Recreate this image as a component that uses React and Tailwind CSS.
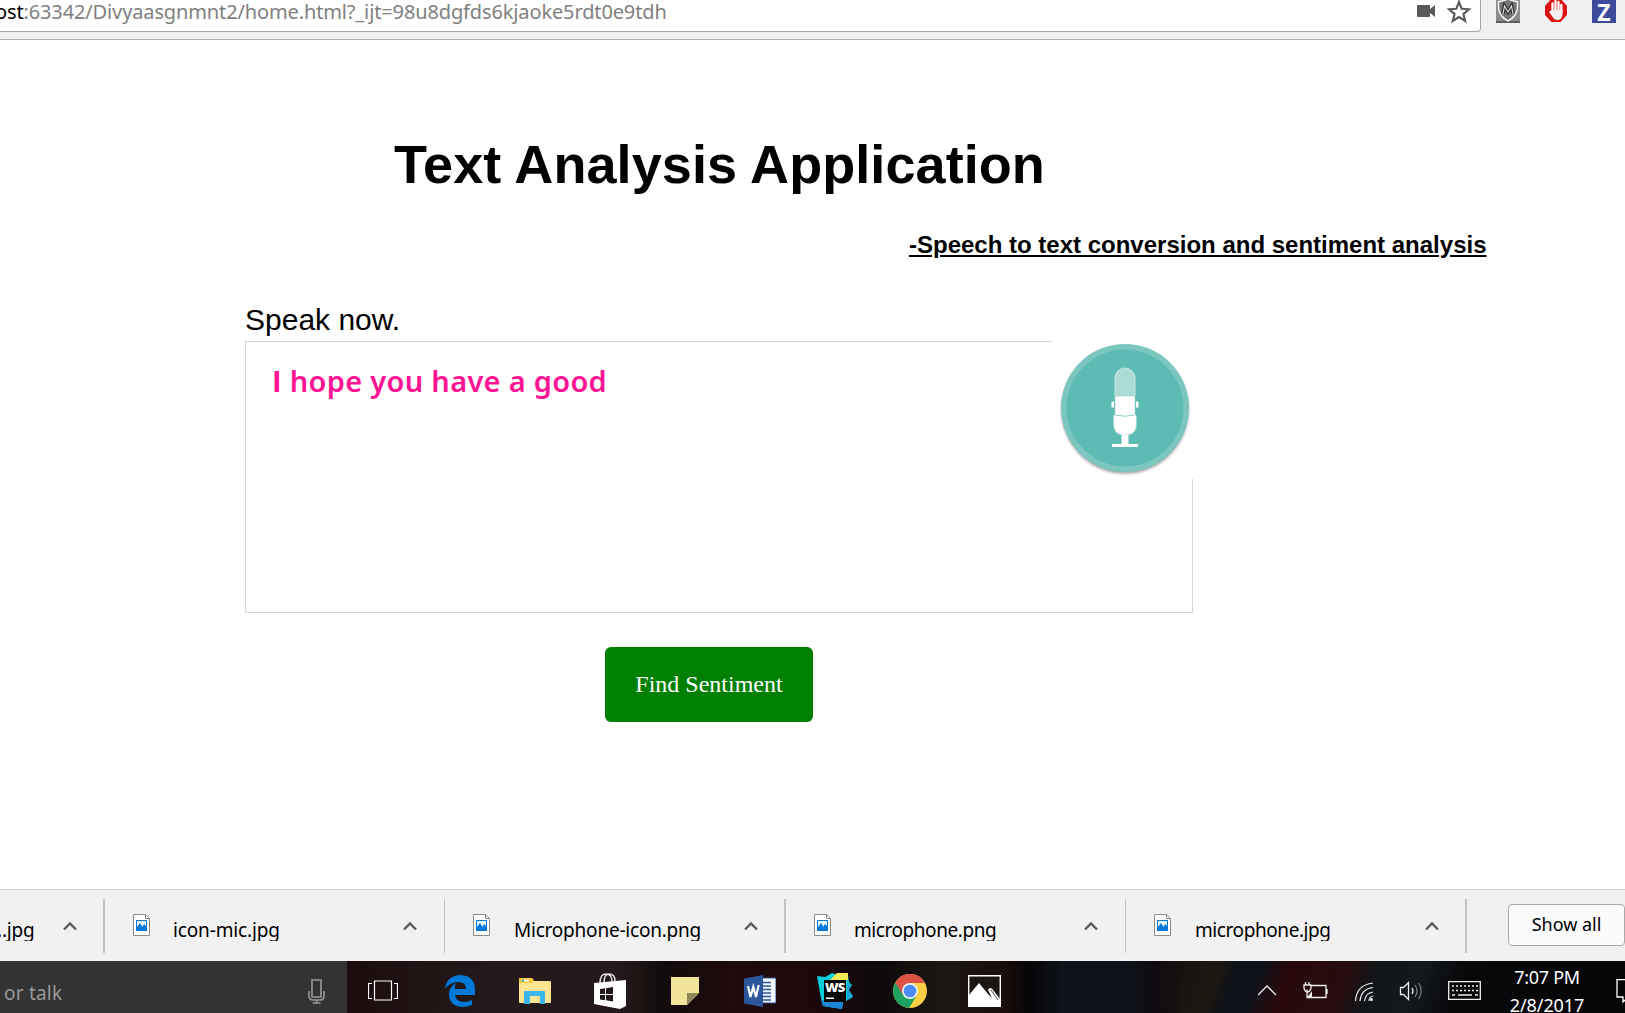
import React from "react";

function Url() {
  return (
    <header className="flex h-10 shrink-0 items-start border-b border-[#b1b1b1] bg-[#f1f1f1]">
      <div className="flex h-8 w-[1481px] items-start rounded-br-[4px] border-r border-b border-[#a6a6a6] bg-white">
        <div className="-ml-[5px] w-[1422px] shrink-0 font-['Noto_Sans',sans-serif] text-[20px] leading-[24px] tracking-[-0.13px] whitespace-nowrap text-[#808080]">
          <span className="text-black">ost</span>:63342/Divyaasgnmnt2/home.html?_ijt=98u8dgfds6kjaoke5rdt0e9tdh
        </div>
        <svg width="60" height="24" viewBox="0 0 60 24" fill="none">
          <path d="M1 5h11q1 0 1 1v3l5-4v12l-5-4v3q0 1-1 1H1q-1 0-1-1V6q0-1 1-1z" fill="#595959" />
          <path d="M42 2l2.700 6.800 7.300.5-5.600 4.700 1.800 7-6.200-3.900-6.200 3.900 1.800-7L32 9.300l7.300-.5z" stroke="#595959" strokeWidth="2.100" />
        </svg>
      </div>
      <div className="ml-[15px] flex items-start">
        <svg width="24" height="23" viewBox="0 0 24 23">
          <rect y="-3" width="24" height="26" rx="1.500" fill="#8b8b8b" />
          <path d="M0 21h24v2H0z" fill="#5c5c5c" />
          <path d="M2.500 1.500q5.500 0 9.500-3 4 3 9.500 3V9q-2 8-9.500 12Q4.500 17 2.500 9z" fill="#777" stroke="#f5f5f5" strokeWidth="1.500" />
          <path d="M7 14l1.500-8L12 12l3.500-6 1.500 8" fill="none" stroke="#333" strokeWidth="3.600" />
          <path d="M7 14l1.500-8L12 12l3.500-6 1.500 8" fill="none" stroke="#e4e4e4" strokeWidth="1.100" />
        </svg>
        <svg className="ml-[25px]" width="22" height="22" viewBox="0 0 22 22">
          <path d="M6-1h10l6 7v9l-6.500 7h-9L0 15V6z" fill="#dc1212" />
          <path d="M7.500 13V3.500M10.500 11V1M13.500 11V2M16.300 13V5M10 18l-4.500-6" stroke="#fff" strokeWidth="2.300" strokeLinecap="round" />
          <path d="M6.500 10h11v5q-1 5-5 5t-5-4z" fill="#f5eeee" />
        </svg>
        <div className="ml-[25px] flex h-[23px] w-6 items-end justify-center bg-[#3c4b9b] font-['Open_Sans',sans-serif] text-[23px] leading-[22px] font-bold text-white">Z</div>
      </div>
    </header>
  );
}

function MicImage() {
  return (
    <svg width="141" height="138" viewBox="1052 340 141 138" className="absolute -top-px -right-px bg-white">
      <defs>
        <filter id="shadow" x="-10%" y="-10%" width="120%" height="120%">
          <feGaussianBlur stdDeviation="1.500" />
        </filter>
      </defs>
      <circle cx="1125" cy="409" r="63.500" fill="#999" filter="url(#shadow)" />
      <circle cx="1125" cy="407" r="64" fill="#7bc7c0" />
      <circle cx="1125" cy="407" r="58.500" fill="#5cbbb2" />
      <path d="M1115 395v-18a10 10 0 0 1 20 0v18z" fill="#addcd7" />
      <path d="M1115 395v-18a10 10 0 0 1 20 0v18" fill="none" stroke="#c9e9e5" />
      <path d="M1115 395h20v18l1.500 2v8q0 10-9 11h-5q-9-1-9-11v-8l1.500-2z" fill="#fff" stroke="#9fd6d1" strokeWidth=".7" />
      <path d="M1115 414q10 2.500 20 0" fill="none" stroke="#8cceca" strokeWidth="1" />
      <path d="M1111.500 400.500h2.500v6h-2.500zM1136 400.500h2.500v6h-2.500z" fill="#fff" />
      <path d="M1121.500 434h7v9h9.500v3h-26v-3h9.500z" fill="#fff" />
    </svg>
  );
}

function Page() {
  return (
    <main className="flex h-[849px] shrink-0 flex-col bg-white font-['Liberation_Sans',sans-serif] text-black">
      <h1 className="mt-[93px] ml-[394px] h-[62px] text-[54px] leading-[62px] font-bold tracking-[0.07px] whitespace-nowrap">Text Analysis Application</h1>
      <h3 className="mt-[36px] ml-[909px] h-7 text-[24px] leading-7 font-bold whitespace-nowrap underline">-Speech to text conversion and sentiment analysis</h3>
      <div className="mt-[44px] ml-[245px] h-[38px] text-[30px] leading-[34px] whitespace-nowrap">Speak now.</div>
      <div className="relative ml-[245px] h-[272px] w-[948px] border border-[#d6d6d6] pt-[19px] pl-[26px]">
        <div className="h-10 font-['Noto_Sans',sans-serif] text-[29px] leading-[40px] font-semibold tracking-[0.3px] whitespace-nowrap text-[#ff1493]">
          <span className="font-['Open_Sans',sans-serif] font-bold">I</span> hope you have a good
        </div>
        <MicImage />
      </div>
      <button className="mt-[34px] ml-[605px] h-[75px] w-[208px] rounded-md bg-[#008000] pb-[2px] font-['Liberation_Serif',serif] text-[24px] whitespace-nowrap text-white">Find Sentiment</button>
    </main>
  );
}

function Caret() {
  return (
    <svg width="14" height="10" viewBox="0 0 14 10" className="mt-[31px] shrink-0">
      <path d="M1 8.500l6-6 6 6" fill="none" stroke="#5a5a5a" strokeWidth="2.400" />
    </svg>
  );
}

function FileIcon() {
  return (
    <svg width="17" height="22" viewBox="0 0 17 22" className="mt-6 shrink-0">
      <path d="M.5.5h12l4 4v17H.5z" fill="#fff" stroke="#8c8c8c" />
      <path d="M12.500.5v4h4" fill="none" stroke="#8c8c8c" />
      <path d="M3 6h11v11H3z" fill="#0078d7" />
      <path d="M4 7h9v5l-2-2-1.500 3L7 9l-3 4z" fill="#e8f5ff" />
    </svg>
  );
}

const files = [
  { name: "icon-mic.jpg", cell: "w-[341px]", rule: "w-[2px]", text: "ml-[23px] tracking-[-0.15px]" },
  { name: "Microphone-icon.png", cell: "w-[340px]", rule: "w-px", text: "ml-[24px] tracking-[-0.22px]" },
  { name: "microphone.png", cell: "w-[341px]", rule: "w-[2px]", text: "ml-[23px] tracking-[-0.44px]" },
  { name: "microphone.jpg", cell: "w-[340px]", rule: "w-px", text: "ml-[24px] tracking-[-0.42px]" },
];

function Downloads() {
  return (
    <section className="flex h-[72px] shrink-0 border-t border-[#d0d0d0] bg-[#f1f1f1] font-['Noto_Sans',sans-serif] text-black">
      <div className="flex w-[103px] shrink-0">
        <div className="mt-[24px] -ml-[3px] h-[27px] w-[66px] shrink-0 overflow-hidden text-[19px] leading-[32px] tracking-[-0.2px]">..jpg</div>
        <Caret />
      </div>
      {files.map((f) => (
        <div key={f.name} className={`flex shrink-0 ${f.cell}`}>
          <div className={`mt-[9px] h-[54px] shrink-0 bg-[#c3c3c3] ${f.rule}`} />
          <div className="w-[28px] shrink-0" />
          <FileIcon />
          <div className={`mt-[24px] h-[27px] w-[230px] shrink-0 overflow-hidden text-[19px] leading-[32px] whitespace-nowrap ${f.text}`}>{f.name}</div>
          <Caret />
        </div>
      ))}
      <div className="mt-[9px] h-[54px] w-[2px] shrink-0 bg-[#c3c3c3]" />
      <button className="mt-[14px] ml-[41px] h-[42px] w-[117px] shrink-0 rounded-[4px] border border-[#a9a9a9] bg-[#fbfbfb] pb-[2px] text-[18px] leading-[38px]">Show all</button>
    </section>
  );
}

function Taskbar() {
  return (
    <footer className="flex h-[52px] shrink-0 overflow-hidden bg-[#0d0b0d] font-['Noto_Sans',sans-serif] text-white">
      <div className="flex w-[347px] shrink-0 bg-[#333]">
        <span className="mt-[16px] ml-[4px] w-[304px] text-[19px] leading-[32px] tracking-[0.2px] text-[#9a9a9a]">or talk</span>
        <svg width="17" height="25" viewBox="0 0 17 25" className="mt-[18px]" fill="none" stroke="#999" strokeWidth="1.600">
          <path d="M4 1h9v17H4zM1 12v5q0 4 4 4h7q4 0 4-4v-5M8.500 21v3M4.500 24h8" />
        </svg>
      </div>
      <div className="flex w-[833px] shrink-0 items-center bg-[linear-gradient(90deg,#1c0c0e,#241a1b_18%,#24191a_33%,#120b0b_38%,#1f0a0d_46%,#1c080b_57%,#0d0a0a_64%,#1c1713_72%,#1a0c0c_79%,#060507_82%,#0e141b_86%,#0f141c_93%,#0e0a10_97%,#16120f)] pt-[8px]">
        <svg className="ml-[21px] shrink-0" width="30" height="22" viewBox="0 0 30 22" fill="none" stroke="#fff">
          <path d="M6.500 1h17v19h-17zM4 3.500H.5v15H4M26 3.500h3.500v15H26" strokeWidth="1.200" />
        </svg>
        <svg className="ml-[47px] shrink-0" width="30" height="32" viewBox="0 0 30 32">
          <path d="M0 14Q2 0 16 0q14 1 14 15v5H10q1 7 9 7 5 0 8-2v5q-5 2-10 2Q4 31 4 19q0-7 7-11-1 2-1 6h11q0-7-8-7Q5 7 0 14z" fill="#0078d7" />
        </svg>
        <svg className="ml-[44px] shrink-0" width="32" height="26" viewBox="0 0 32 26">
          <path d="M0 1q0-1 1-1h12l2 3h16q1 0 1 1v20q0 1-1 1H1q-1 0-1-1z" fill="#ffe593" />
          <path d="M0 1q0-1 1-1h12l2 3-2 2H0z" fill="#fbc933" />
          <path d="M3 1.500h7v2H3z" fill="#fff" />
          <path d="M3 1.500h2v2H3z" fill="#2aa" />
          <path d="M5 26V14q0-1 1-1h19q1 0 1 1v12h-5v-8H11v8z" fill="#3bb5ea" />
        </svg>
        <svg className="ml-[43px] shrink-0" width="32" height="36" viewBox="0 0 32 36">
          <path d="M6 10Q6 1 12 1q6 0 6 8M10 10Q10 1 15 1q6 0 6 7" fill="none" stroke="#ddd" strokeWidth="1.500" />
          <path d="M0 10l32-3v26l-6 3-26-5z" fill="#fff" />
          <path d="M6 16l5-.7V21H6zM12 15.200l7-1.200v7h-7zM6 22h5v5.200L6 26.500zM12 22h7v6.500l-7-1.200z" fill="#21181a" />
        </svg>
        <svg className="ml-[45px] shrink-0" width="28" height="28" viewBox="0 0 28 28">
          <path d="M0 0h28v16L16 28H0z" fill="#f1e59a" />
          <path d="M16 28V16h12z" fill="#8f8758" />
        </svg>
        <svg className="ml-[45px] shrink-0" width="32" height="32" viewBox="0 0 32 32">
          <path d="M17 3h14q1 0 1 1v23q0 1-1 1H17z" fill="#f3f6fb" stroke="#2b579a" />
          <path d="M19 7.500h8M19 11h8M19 14.500h8M19 18h8M19 21.500h8M19 25h8" stroke="#2b579a" strokeWidth="1.500" />
          <path d="M0 3.500L19 0v32L0 28.500z" fill="#2b579a" />
          <path d="M4 11l2.500 11L9.300 12 12 22l2.700-12" fill="none" stroke="#fff" strokeWidth="2.200" />
        </svg>
        <div className="relative ml-[41px] h-9 w-9 shrink-0">
          <svg width="36" height="36" viewBox="0 0 36 36">
            <path d="M0 3l8 1 7-4 6 2h10l1 7 3 3-4 5 5 7-7 4h-3l-1 8-19-3-2-8z" fill="#07d0da" />
            <path d="M4 27l22 2-1 7-19-3z" fill="#1a86d8" />
            <path d="M30 9l5 3-3 5 4 6-6 4z" fill="#1ca6da" />
            <path d="M13 7l7-7h11v7z" fill="#f5ec55" />
            <path d="M7 7h22v22H7z" fill="#080808" />
            <path d="M9 24.500h8V26H9z" fill="#fff" />
          </svg>
          <span className="absolute top-[8px] left-[8px] font-['Open_Sans',sans-serif] text-[13px] leading-[13px] font-extrabold tracking-[-0.7px]">WS</span>
        </div>
        <svg className="ml-[40px] shrink-0" width="34" height="34" viewBox="-17 -17 34 34">
          <circle r="17" fill="#fdcf42" />
          <path d="M0 0L-14.700-8.500A17 17 0 0 0-1 17L7 4z" fill="#1da25f" />
          <path d="M-14.700-8.500A17 17 0 0 1 15-8H0v8L-7 4z" fill="#dd5144" />
          <circle r="8" fill="#f1f1f1" />
          <circle r="6.300" fill="#4b8bf5" />
        </svg>
        <svg className="ml-[41px] shrink-0" width="33" height="32" viewBox="0 0 33 32">
          <path d="M.7.7h31.600v30.600H.7z" fill="#1b1613" stroke="#fff" strokeWidth="1.400" />
          <path d="M1 20L11 8l9 11 4 4-4-8q2-4 5 0l7 9v8H1z" fill="#fff" />
          <path d="M23 15l7 10" stroke="#1b1613" strokeWidth=".8" />
        </svg>
      </div>
      <div className="flex w-[445px] shrink-0 items-start bg-[linear-gradient(110deg,#16120f,#1d1711_9%,#0d1119_13%,#10131b_18%,#27090b_24%,#260c0e_37%,#111519_43%,#14181c_53%,#07080a_62%,#050506)]">
        <svg className="mt-[18px] ml-[78px] shrink-0" width="224" height="24" viewBox="1258 979 224 24" fill="none" stroke="#eee" strokeWidth="1.300">
          <path d="M1258 995l9-9 9 9" />
          <path d="M1310 985.500h16v12h-19v-8M1327 989v5M1304 985h7v3q-1 4-3.500 4t-3.500-4zM1305.500 982v3M1309 982v3M1307 992v6" />
          <path d="M1309 995l3-4v6h-5z" fill="#eee" stroke="none" />
          <path d="M1355.500 1001q1-16 17.500-18M1360 1001q1-12 13-13.500M1364.500 1001q1-8 8.500-9M1369 1001q0-4 4-5" strokeWidth="1.200" />
          <circle cx="1371.500" cy="999.500" r="1.500" fill="#eee" stroke="none" />
          <path d="M1400.500 987.500h3l5-5v17l-5-5h-3zM1412 988q2 3 0 6" />
          <path d="M1415 985q4 6 0 12M1418.500 983q5.500 8 0 16" stroke="#777" />
          <path d="M1448.700 981.700h31.600v17.600h-31.600z" />
          <path d="M1452 986h26M1452 990.500h26" strokeDasharray="2 2" />
          <path d="M1452 995h3M1458 995h14M1475 995h3" />
        </svg>
        <div className="ml-[27px] flex h-[52px] w-[76px] shrink-0 flex-col items-center text-[18px] leading-7 whitespace-nowrap">
          <span className="mt-[2px] tracking-[-0.3px]">7:07 PM</span>
          <span className="tracking-[-0.1px]">2/8/2017</span>
        </div>
        <svg className="mt-[18px] ml-[31px] shrink-0" width="9" height="26" viewBox="0 0 9 26" fill="none" stroke="#fff" strokeWidth="1.300">
          <path d="M9 .7H1V18h6v5l2-2" />
        </svg>
      </div>
    </footer>
  );
}

export default function App() {
  return (
    <div className="flex h-[1013px] w-[1625px] flex-col overflow-hidden">
      <Url />
      <Page />
      <Downloads />
      <Taskbar />
    </div>
  );
}
